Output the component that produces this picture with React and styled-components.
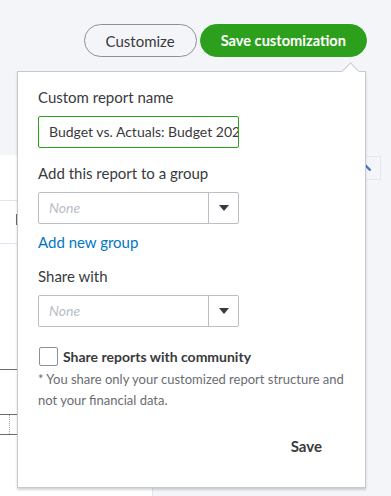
import React from "react";
import styled, { createGlobalStyle } from "styled-components";

const GlobalStyle = createGlobalStyle`
  html, body {
    margin: 0;
    padding: 0;
    background: #f4f5f8;
  }
  body {
    font-family: Lato, "Open Sans", sans-serif;
    color: #393a3d;
  }
`;

const StyledPage = styled.div`
  position: relative;
  width: 391px;
  height: 496px;
  overflow: hidden;
  background: #f4f5f8;
  display: flex;
  flex-direction: column;
`;

const StyledHeader = styled.div`
  display: flex;
  justify-content: flex-end;
  gap: 3px;
  padding: 24px 24px 0 0;
  height: 155px;
  box-sizing: border-box;
  flex-shrink: 0;
`;

const StyledPillButton = styled.button`
  height: 33px;
  border-radius: 17px;
  font-family: inherit;
  font-size: ${(p) => (p.$primary ? "14.6px" : "15px")};
  padding: 0 ${(p) => (p.$primary ? "20px" : "21px")};
  border: 1px solid ${(p) => (p.$primary ? "#2ca01c" : "#8d9096")};
  background: ${(p) => (p.$primary ? "#2ca01c" : "transparent")};
  color: ${(p) => (p.$primary ? "#ffffff" : "#393a3d")};
  font-weight: ${(p) => (p.$primary ? 700 : 400)};
`;

const StyledBody = styled.div`
  flex: 1;
  display: flex;
`;

const StyledLeftPane = styled.div`
  width: 152px;
  background: #ffffff;
  border-right: 1px solid #dfe6f3;
  display: flex;
  flex-direction: column;
`;

const StyledRule = styled.div`
  height: ${(p) => p.$space}px;
  border-bottom: 1px solid ${(p) => p.$color};
  flex-shrink: 0;
  display: flex;
  align-items: center;
`;

const StyledHandle = styled.div`
  width: 2px;
  height: 11px;
  margin: 0 0 6px 16px;
  background: #6b6c72;
`;

const StyledCellRow = styled.div`
  height: 19px;
  border-bottom: 1px solid #6b6c72;
  display: flex;
`;

const StyledDottedCell = styled.div`
  width: 9px;
  border-right: 1px dotted #9a9ca1;
`;

const StyledRightPane = styled.div`
  flex: 1;
  display: flex;
  justify-content: flex-end;
  align-items: flex-start;
  padding: 1px 10px 0 0;
`;

const StyledToolBox = styled.div`
  width: 29px;
  height: 22px;
  border: 1px solid #e3e6ee;
  display: flex;
  align-items: center;
  justify-content: center;
`;

const StyledPopover = styled.div`
  position: absolute;
  left: 17px;
  top: 71px;
  width: 349px;
  height: 417px;
  box-sizing: border-box;
  background: #ffffff;
  border: 1px solid #c6c9ce;
  box-shadow: 0 2px 2px rgba(0, 0, 0, 0.16);
  padding: 15px 20px 0 20px;
  display: flex;
  flex-direction: column;
  &::before {
    content: "";
    position: absolute;
    top: -7px;
    right: 8px;
    width: 12px;
    height: 12px;
    background: #ffffff;
    border-left: 1px solid #c6c9ce;
    border-top: 1px solid #c6c9ce;
    transform: rotate(45deg);
  }
`;

const StyledLabel = styled.div`
  font-size: 15px;
  line-height: 20px;
  color: #393a3d;
  margin-bottom: 9px;
`;

const StyledTextInput = styled.div`
  width: 201px;
  height: 32px;
  box-sizing: border-box;
  border: 1px solid #2ca01c;
  border-radius: 2px;
  padding: 0 8px 0 10px;
  font-size: 14px;
  line-height: 30px;
  white-space: nowrap;
  overflow: hidden;
  color: #393a3d;
  margin-bottom: 15px;
`;

const StyledSelect = styled.div`
  width: 201px;
  height: 32px;
  box-sizing: border-box;
  border: 1px solid #babec5;
  border-radius: 2px;
  display: flex;
  margin-bottom: ${(p) => p.$gap}px;
`;

const StyledPlaceholder = styled.div`
  flex: 1;
  padding-left: 10px;
  font-size: 14px;
  line-height: 30px;
  font-style: italic;
  color: #babec5;
`;

const StyledArrowCell = styled.div`
  width: 29px;
  border-left: 1px solid #babec5;
  display: flex;
  align-items: center;
  justify-content: center;
  &::after {
    content: "";
    border-left: 5px solid transparent;
    border-right: 5px solid transparent;
    border-top: 6px solid #393a3d;
  }
`;

const StyledLink = styled.div`
  font-size: 15px;
  line-height: 20px;
  color: #0077c5;
  margin-bottom: 14px;
`;

const StyledCheckRow = styled.label`
  display: flex;
  align-items: center;
  gap: 5px;
  font-size: 14px;
  font-weight: 700;
  color: #393a3d;
  margin-left: 1px;
`;

const StyledCheckbox = styled.span`
  width: 19px;
  height: 19px;
  box-sizing: border-box;
  border: 1px solid #8d9096;
  border-radius: 2px;
  background: #ffffff;
`;

const StyledNote = styled.div`
  font-size: 13px;
  line-height: 21px;
  color: #6b6c72;
  margin-top: 3px;
`;

const StyledFooter = styled.div`
  display: flex;
  justify-content: flex-end;
  padding: 25px 23px 0 0;
`;

const StyledSaveText = styled.div`
  font-size: 15px;
  line-height: 20px;
  font-weight: 700;
  color: #393a3d;
`;

function ChevronUp() {
  return (
    <svg width="12" height="8" viewBox="0 0 12 8">
      <path d="M1.5 6.5 L6 2 L10.5 6.5" fill="none" stroke="#4a72c4" strokeWidth="2.4" />
    </svg>
  );
}

export default function App() {
  return (
    <StyledPage>
      <GlobalStyle />
      <StyledHeader>
        <StyledPillButton>Customize</StyledPillButton>
        <StyledPillButton $primary>Save customization</StyledPillButton>
      </StyledHeader>
      <StyledBody>
        <StyledLeftPane>
          <StyledRule $space={45} $color="#e3e5e8" />
          <StyledRule $space={42} $color="#dfe6f3">
            <StyledHandle />
          </StyledRule>
          <StyledRule $space={125} $color="#6b6c72" />
          <StyledRule $space={44} $color="#6b6c72" />
          <StyledCellRow>
            <StyledDottedCell />
          </StyledCellRow>
        </StyledLeftPane>
        <StyledRightPane>
          <StyledToolBox>
            <ChevronUp />
          </StyledToolBox>
        </StyledRightPane>
      </StyledBody>

      <StyledPopover>
        <StyledLabel>Custom report name</StyledLabel>
        <StyledTextInput>Budget vs. Actuals: Budget 2024</StyledTextInput>
        <StyledLabel>Add this report to a group</StyledLabel>
        <StyledSelect $gap={8}>
          <StyledPlaceholder>None</StyledPlaceholder>
          <StyledArrowCell />
        </StyledSelect>
        <StyledLink>Add new group</StyledLink>
        <StyledLabel>Share with</StyledLabel>
        <StyledSelect $gap={20}>
          <StyledPlaceholder>None</StyledPlaceholder>
          <StyledArrowCell />
        </StyledSelect>
        <StyledCheckRow>
          <StyledCheckbox />
          Share reports with community
        </StyledCheckRow>
        <StyledNote>
          * You share only your customized report structure and not your
          financial data.
        </StyledNote>
        <StyledFooter>
          <StyledSaveText>Save</StyledSaveText>
        </StyledFooter>
      </StyledPopover>
    </StyledPage>
  );
}
